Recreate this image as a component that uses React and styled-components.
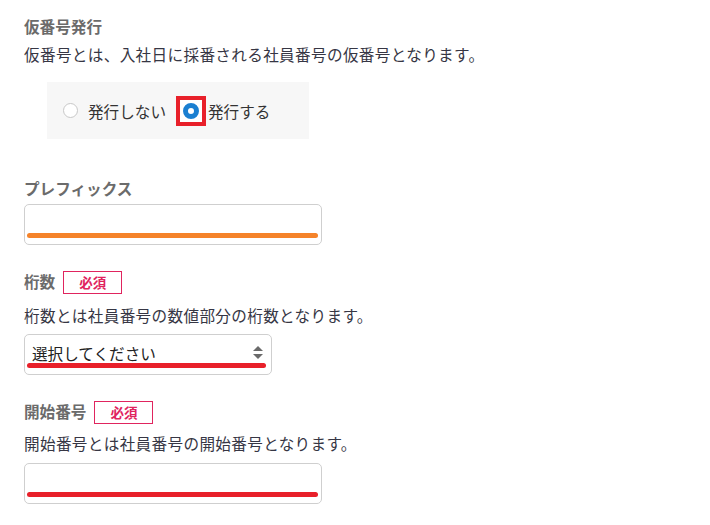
import styled, { createGlobalStyle } from 'styled-components';

const GlobalStyle = createGlobalStyle`
  html, body {
    margin: 0;
    background: #ffffff;
  }
  body {
    font-family: 'Noto Sans CJK JP', 'Noto Sans', sans-serif;
    color: #3a3a44;
  }
`;

const Page = styled.div`
  padding: 14px 24px 0 24px;
  display: flex;
  flex-direction: column;
`;

const Label = styled.div`
  font-size: 15.6px;
  line-height: 24px;
  font-weight: 700;
  color: #6b6b6b;
  flex-shrink: 0;
  margin-top: ${(p) => p.$top || 0}px;
`;

const LabelRow = styled.div`
  display: flex;
  align-items: center;
  gap: 8px;
  height: 24px;
  margin-top: ${(p) => p.$top || 0}px;
`;

const Badge = styled.span`
  box-sizing: border-box;
  flex-shrink: 0;
  width: 59px;
  height: 23px;
  border: 1px solid #e0245e;
  color: #e0245e;
  font-size: 13.5px;
  font-weight: 700;
  display: flex;
  align-items: center;
  justify-content: center;
  margin-top: 2px;
`;

const Desc = styled.div`
  font-size: 15.6px;
  line-height: 24px;
  letter-spacing: 0.35px;
  color: #363644;
  margin-top: ${(p) => p.$top || 0}px;
`;

const RadioBox = styled.div`
  box-sizing: border-box;
  width: 262px;
  height: 57px;
  margin: 16px 0 0 23px;
  padding-left: 16px;
  background: #f7f7f7;
  display: flex;
  align-items: center;
  font-size: 15.6px;
  color: #333;
`;

const RadioCircle = styled.span`
  box-sizing: border-box;
  width: 15px;
  height: 15px;
  border-radius: 50%;
  border: 1px solid #c8c8c8;
  background: #fff;
  margin-right: 10px;
`;

const Highlight = styled.span`
  box-sizing: border-box;
  width: 30px;
  height: 30px;
  border: 4px solid #e8202a;
  background: #fff;
  display: flex;
  align-items: center;
  justify-content: center;
  margin: 0 2px 0 10px;
`;

const RadioChecked = styled.span`
  box-sizing: border-box;
  width: 16px;
  height: 16px;
  border-radius: 50%;
  border: 5px solid #1a7fd1;
  background: #fff;
`;

const Field = styled.div`
  position: relative;
  box-sizing: border-box;
  width: ${(p) => p.$width}px;
  height: 41px;
  border: 1px solid #cfcfcf;
  border-radius: 5px;
  background: #fff;
  margin-top: ${(p) => p.$top || 0}px;
  display: flex;
  align-items: center;
  padding: 0 8px 4px 7px;
  font-size: 15.6px;
  color: #222;
`;

const Mark = styled.span`
  position: absolute;
  left: 2px;
  right: ${(p) => p.$right}px;
  bottom: 6px;
  height: 5px;
  border-radius: 3px;
  background: ${(p) => p.$color};
`;

const SelectText = styled.span`
  flex: 1;
`;

const Arrows = () => (
  <svg width="10" height="13" viewBox="0 0 10 13">
    <path d="M5 0 L10 5 L0 5 Z" fill="#6a6a6a" />
    <path d="M5 13 L10 8 L0 8 Z" fill="#6a6a6a" />
  </svg>
);

export default function App() {
  return (
    <>
      <GlobalStyle />
      <Page>
        <Label>仮番号発行</Label>
        <Desc $top={4}>仮番号とは、入社日に採番される社員番号の仮番号となります。</Desc>
        <RadioBox>
          <RadioCircle />
          <span>発行しない</span>
          <Highlight>
            <RadioChecked />
          </Highlight>
          <span>発行する</span>
        </RadioBox>

        <Label $top={37}>プレフィックス</Label>
        <Field $width={298} $top={4}>
          <Mark $color="#f5832a" $right={3} />
        </Field>

        <LabelRow $top={24}>
          <Label>桁数</Label>
          <Badge>必須</Badge>
        </LabelRow>
        <Desc $top={10}>桁数とは社員番号の数値部分の桁数となります。</Desc>
        <Field $width={248} $top={7}>
          <SelectText>選択してください</SelectText>
          <Arrows />
          <Mark $color="#e8202a" $right={5} />
        </Field>

        <LabelRow $top={24}>
          <Label>開始番号</Label>
          <Badge>必須</Badge>
        </LabelRow>
        <Desc $top={8}>開始番号とは社員番号の開始番号となります。</Desc>
        <Field $width={298} $top={8}>
          <Mark $color="#e8202a" $right={3} />
        </Field>
      </Page>
    </>
  );
}
